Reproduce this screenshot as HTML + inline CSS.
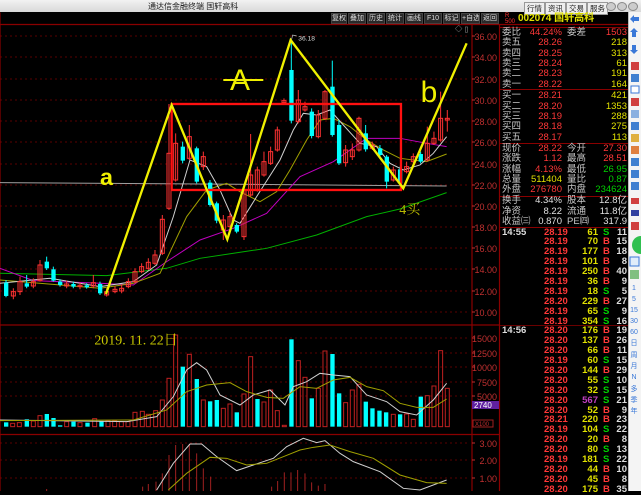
<!DOCTYPE html>
<html><head><meta charset="utf-8"><style>
*{margin:0;padding:0;box-sizing:border-box}
body{width:641px;height:491px;background:#000;overflow:hidden;position:relative;font-family:"Liberation Sans","Noto Sans CJK SC",sans-serif}
.t{position:absolute;white-space:nowrap;font-size:10px;line-height:10px}
.btn{position:absolute;top:13px;height:11px;background:#2a2a2a;border:1px solid #444;color:#ddd;font-size:7px;line-height:9px;text-align:center;white-space:nowrap;overflow:hidden}
.q{position:absolute;left:500px;width:128px;font-size:9.5px;line-height:10px;height:10px}
.q span{position:absolute;white-space:nowrap}
.l{left:2px;color:#c8c8c8}
.v{right:66px;text-align:right}
.l2{left:67px;color:#c8c8c8}
.v2{right:1px;text-align:right}
.r{color:#ff3838}.y{color:#e0e000}.g{color:#00d000}.w{color:#e0e0e0}
</style></head><body>
<div style="position:absolute;left:0;top:0;width:641px;height:12px;background:linear-gradient(#f2f2f2,#d8d8d8)"></div>
<div class="t" style="left:148px;top:2px;font-size:8px;color:#222">通达信金融终端 国轩高科</div>
<div style="position:absolute;left:524px;top:2px;font-size:7.5px;color:#222;white-space:nowrap">
<span style="display:inline-block;border:1px solid #999;padding:0 2px;background:#eee">行情</span><span style="display:inline-block;border:1px solid #999;padding:0 2px;background:#eee">资讯</span><span style="display:inline-block;border:1px solid #999;padding:0 2px;background:#eee">交易</span><span style="display:inline-block;border:1px solid #999;padding:0 2px;background:#eee">服务</span></div>
<div style="position:absolute;left:606px;top:2px;width:10px;height:9px;border-radius:50%;background:#ccc;border:1px solid #888"></div>
<div style="position:absolute;left:617px;top:2px;width:10px;height:9px;border-radius:50%;background:#ccc;border:1px solid #888"></div>
<div style="position:absolute;left:628px;top:2px;width:10px;height:9px;border-radius:50%;background:#ccc;border:1px solid #888"></div>

<div class="btn" style="left:331px;width:16px">复权</div>
<div class="btn" style="left:348px;width:18px">叠加</div>
<div class="btn" style="left:367px;width:18px">历史</div>
<div class="btn" style="left:386px;width:18px">统计</div>
<div class="btn" style="left:405px;width:18px">画线</div>
<div class="btn" style="left:424px;width:18px">F10</div>
<div class="btn" style="left:443px;width:17px">标记</div>
<div class="btn" style="left:461px;width:19px">+自选</div>
<div class="btn" style="left:481px;width:18px">返回</div>

<svg style="position:absolute;left:0;top:0" width="641" height="491">
<g stroke="#5a0000" stroke-dasharray="2,3" stroke-width="1">
<path d="M0 36H470M0 57H470M0 79H470M0 100H470M0 121H470M0 142H470M0 164H470M0 185H470M0 206H470M0 227H470M0 248H470M0 269H470M0 291H470M0 312H470M0 338H470M0 353H470M0 367H470M0 382H470M0 396H470M0 443H470M0 460H470M0 478H470"/>
</g>
<g stroke="#8a0000" stroke-width="1.2" fill="none">
<path d="M0 24.5H641M0 325H500M0 434.5H500M472 24V491M499.5 24V491M0 12.5V491"/>
</g>
<g transform="translate(0,10) scale(0.3333)">
<path d="M0 518 L600 522 L1340 528" stroke="#a0a0a0" stroke-width="3" fill="none"/>
<path d="M0 790 L320 797 L500 775 L600 745 L800 715 L950 675 L1100 620 L1200 597 L1340 548" stroke="#00b000" stroke-width="3" fill="none"/>
<path d="M0 775 L100 812 L300 820 L400 825 L500 755 L600 690 L700 655 L800 610 L900 500 L1000 455 L1100 385 L1200 385 L1280 400 L1340 410" stroke="#c000c0" stroke-width="3" fill="none"/>
<path d="M0 810 L300 835 L400 820 L480 790 L560 620 L620 540 L680 520 L720 545 L780 575 L830 545 L870 480 L920 390 L960 330 L1000 325 L1050 350 L1100 390 L1150 420 L1200 445 L1280 455 L1340 432" stroke="#a0a000" stroke-width="3" fill="none"/>
<path d="M0 820 L150 805 L300 830 L400 815 L470 765 L520 620 L570 450 L620 470 L660 540 L700 630 L720 640 L770 560 L840 450 L880 360 L910 310 L950 315 L990 300 L1030 345 L1080 400 L1130 410 L1170 460 L1210 480 L1260 465 L1300 430 L1340 380" stroke="#d0d0d0" stroke-width="3" fill="none"/>
<path stroke="#ff3232" stroke-width="3" d="M40 835V868M60 800V855M100 805V835M120 750V815M200 812V835M240 818V838M280 795V835M320 835V860M345 828V850M365 825V850M385 805V835M405 775V820M425 760V790M445 745V780M465 720V765M487 615V735M507 282V600M527 370V515M568 345V450M610 425V480M670 615V690M690 605V660M732 530V690M752 372V560M772 470V545M792 425V500M812 410V465M832 350V425M852 265V285M895 240V340M915 275V305M955 300V385M975 240V330M1037 405V470M1057 400V450M1077 320V425M1117 395V420M1180 470V515M1220 455V490M1240 430V460M1282 350V455M1302 365V405M1322 245V395M1342 300V365"/>
<path stroke="#00ffff" stroke-width="3" d="M18 810V862M80 795V835M140 740V780M160 770V815M180 808V830M220 815V835M260 820V836M300 815V855M548 395V460M590 410V520M630 510V590M650 575V640M710 640V670M874 90V340M935 295V385M997 152V380M1017 330V465M1097 345V425M1140 405V440M1160 435V535M1200 470V525M1262 425V460"/>
<g fill="none" stroke="#ff3232" stroke-width="3">
<rect x="34" y="845" width="12" height="13"/><rect x="54" y="815" width="12" height="30"/><rect x="94" y="815" width="12" height="13"/><rect x="114" y="765" width="12" height="47"/><rect x="194" y="822" width="12" height="6"/><rect x="234" y="826" width="12" height="4"/><rect x="274" y="818" width="12" height="10"/><rect x="314" y="845" width="12" height="10"/><rect x="339" y="838" width="12" height="7"/><rect x="359" y="835" width="12" height="8"/><rect x="379" y="815" width="12" height="15"/><rect x="399" y="785" width="12" height="30"/><rect x="419" y="770" width="12" height="15"/><rect x="439" y="757" width="12" height="18"/><rect x="459" y="735" width="12" height="25"/><rect x="481" y="628" width="12" height="102"/><rect x="501" y="430" width="12" height="165"/><rect x="521" y="400" width="12" height="110"/><rect x="562" y="380" width="12" height="65"/><rect x="604" y="440" width="12" height="30"/><rect x="664" y="630" width="12" height="30"/><rect x="684" y="620" width="12" height="30"/><rect x="726" y="540" width="12" height="140"/><rect x="746" y="495" width="12" height="60"/><rect x="766" y="480" width="12" height="60"/><rect x="786" y="455" width="12" height="40"/><rect x="806" y="425" width="12" height="35"/><rect x="826" y="360" width="12" height="60"/><rect x="846" y="272" width="12" height="6"/><rect x="889" y="270" width="12" height="65"/><rect x="909" y="290" width="12" height="10"/><rect x="949" y="315" width="12" height="65"/><rect x="969" y="245" width="12" height="80"/><rect x="1031" y="420" width="12" height="38"/><rect x="1051" y="420" width="12" height="20"/><rect x="1071" y="325" width="12" height="95"/><rect x="1111" y="405" width="12" height="10"/><rect x="1174" y="480" width="12" height="30"/><rect x="1214" y="470" width="12" height="15"/><rect x="1234" y="440" width="12" height="15"/><rect x="1276" y="400" width="12" height="50"/><rect x="1296" y="385" width="12" height="15"/><rect x="1316" y="325" width="12" height="65"/><rect x="1336" y="325" width="12" height="5"/>
</g>
<g fill="#00ffff">
<rect x="12" y="818" width="13" height="40"/><rect x="74" y="820" width="13" height="10"/><rect x="134" y="755" width="13" height="20"/><rect x="154" y="778" width="13" height="34"/><rect x="174" y="815" width="13" height="10"/><rect x="214" y="822" width="13" height="8"/><rect x="254" y="826" width="13" height="6"/><rect x="294" y="822" width="13" height="28"/><rect x="542" y="410" width="13" height="42"/><rect x="584" y="415" width="13" height="100"/><rect x="624" y="518" width="13" height="67"/><rect x="644" y="580" width="13" height="52"/><rect x="704" y="645" width="13" height="20"/><rect x="868" y="180" width="13" height="152"/><rect x="929" y="305" width="13" height="73"/><rect x="991" y="230" width="13" height="145"/><rect x="1011" y="345" width="13" height="115"/><rect x="1091" y="370" width="13" height="48"/><rect x="1134" y="415" width="13" height="20"/><rect x="1154" y="440" width="13" height="75"/><rect x="1194" y="478" width="13" height="42"/><rect x="1256" y="432" width="13" height="23"/>
</g>
<rect x="515" y="282" width="688" height="258" fill="none" stroke="#ff1010" stroke-width="7"/>
<path d="M318 852 L515 285 L682 688 L872 90 L1210 535 L1400 100" fill="none" stroke="#f0f000" stroke-width="7"/>
<path d="M875 88 L878 75 L890 78" fill="none" stroke="#ccc" stroke-width="2"/>
<text x="895" y="92" fill="#ddd" font-size="20">36.18</text>
<text x="300" y="525" fill="#f0f000" font-size="70" font-weight="bold" font-family="Liberation Sans,sans-serif">a</text>
<text x="690" y="240" fill="#f0f000" font-size="90" font-family="Liberation Sans,sans-serif">A</text>
<path d="M670 210H790" stroke="#f0f000" stroke-width="6"/>
<text x="1262" y="276" fill="#f0f000" font-size="90" font-family="Liberation Sans,sans-serif">b</text>
<text x="1198" y="612" fill="#b8b800" font-size="42" font-family="Liberation Serif,Noto Serif CJK SC,serif">4买</text>
<text x="1365" y="64" fill="#aaa" font-size="22">◇ ▯</text>
</g>
<g transform="translate(0,320) scale(0.3333)">
<g fill="none" stroke="#c02020" stroke-width="3">
<rect x="32" y="310" width="12" height="10"/><rect x="52" y="308" width="12" height="12"/><rect x="94" y="303" width="12" height="17"/><rect x="114" y="287" width="12" height="33"/><rect x="194" y="305" width="12" height="15"/><rect x="234" y="308" width="12" height="12"/><rect x="278" y="296" width="12" height="24"/><rect x="318" y="303" width="12" height="17"/><rect x="338" y="303" width="12" height="17"/><rect x="358" y="305" width="12" height="15"/><rect x="378" y="305" width="12" height="15"/><rect x="399" y="277" width="12" height="43"/><rect x="421" y="274" width="12" height="46"/><rect x="439" y="283" width="12" height="37"/><rect x="461" y="272" width="12" height="48"/><rect x="481" y="240" width="12" height="80"/><rect x="501" y="175" width="12" height="145"/><rect x="521" y="45" width="12" height="275"/><rect x="562" y="103" width="12" height="217"/><rect x="604" y="240" width="12" height="80"/><rect x="664" y="265" width="12" height="55"/><rect x="684" y="252" width="12" height="68"/><rect x="726" y="222" width="12" height="98"/><rect x="746" y="110" width="12" height="210"/><rect x="786" y="246" width="12" height="74"/><rect x="806" y="210" width="12" height="110"/><rect x="826" y="272" width="12" height="48"/><rect x="847" y="316" width="12" height="4"/><rect x="889" y="122" width="12" height="198"/><rect x="909" y="172" width="12" height="148"/><rect x="949" y="205" width="12" height="115"/><rect x="969" y="93" width="12" height="227"/><rect x="1031" y="248" width="12" height="72"/><rect x="1051" y="210" width="12" height="110"/><rect x="1071" y="193" width="12" height="127"/><rect x="1174" y="283" width="12" height="37"/><rect x="1214" y="282" width="12" height="38"/><rect x="1234" y="298" width="12" height="22"/><rect x="1276" y="227" width="12" height="93"/><rect x="1296" y="198" width="12" height="122"/><rect x="1316" y="92" width="12" height="228"/><rect x="1336" y="205" width="12" height="115"/>
</g>
<g fill="#00ffff">
<rect x="12" y="307" width="13" height="13"/><rect x="74" y="298" width="13" height="22"/><rect x="134" y="282" width="13" height="38"/><rect x="154" y="294" width="13" height="26"/><rect x="174" y="316" width="13" height="4"/><rect x="214" y="305" width="13" height="15"/><rect x="256" y="308" width="13" height="12"/><rect x="298" y="304" width="13" height="16"/><rect x="542" y="140" width="13" height="180"/><rect x="584" y="177" width="13" height="143"/><rect x="624" y="244" width="13" height="76"/><rect x="644" y="240" width="13" height="80"/><rect x="704" y="277" width="13" height="43"/><rect x="766" y="237" width="13" height="83"/><rect x="868" y="58" width="13" height="262"/><rect x="929" y="235" width="13" height="85"/><rect x="991" y="102" width="13" height="218"/><rect x="1011" y="220" width="13" height="100"/><rect x="1091" y="245" width="13" height="75"/><rect x="1111" y="265" width="13" height="55"/><rect x="1132" y="272" width="13" height="48"/><rect x="1152" y="277" width="13" height="43"/><rect x="1194" y="283" width="13" height="37"/><rect x="1256" y="230" width="13" height="90"/>
</g>
<path d="M0 300 L380 305 L470 290 L520 230 L560 150 L590 128 L620 150 L660 225 L720 255 L760 225 L810 210 L855 255 L880 200 L920 185 L960 160 L1000 165 L1050 170 L1100 225 L1160 245 L1200 275 L1250 285 L1300 240 L1340 190" fill="none" stroke="#d0d0d0" stroke-width="3"/>
<path d="M0 302 L400 300 L500 270 L560 215 L620 195 L690 188 L740 215 L800 232 L850 235 L900 200 L950 205 L1000 180 L1050 172 L1100 200 L1150 212 L1200 250 L1250 262 L1300 262 L1340 237" fill="none" stroke="#a0a000" stroke-width="3"/>
<text x="283" y="74" fill="#c8c800" font-size="42" font-family="Liberation Serif,Noto Serif CJK SC,serif">2019. 11. 22日</text>
<path stroke="#a02020" stroke-width="3" d="M428 513V500M445 513V492M468 513V485M487 513V460M507 513V405M527 513V375M548 513V372M568 513V372M590 513V400M610 513V445M632 513V470M815 513V500M833 513V483M853 513V457M873 513V457M893 513V450M915 513V460M935 513V487M955 513V497M975 513V492M140 513V507"/>
<path d="M470 510 L520 430 L570 372 L605 372 L650 410 L710 452 L760 435 L820 415 L860 380 L910 355 L950 368 L975 362 L1020 400 L1060 425 L1140 455 L1210 505 L1260 510 L1340 480" fill="none" stroke="#d0d0d0" stroke-width="3"/>
<path d="M505 510 L560 460 L630 412 L680 415 L740 435 L800 430 L850 410 L900 390 L940 382 L990 375 L1050 395 L1120 415 L1200 465 L1280 488 L1340 490" fill="none" stroke="#a0a000" stroke-width="3"/>
</g>
<g fill="#c03030" font-size="9" text-anchor="end" font-family="Liberation Sans,sans-serif">
<text x="497" y="40">36.00</text><text x="497" y="61">34.00</text><text x="497" y="83">32.00</text><text x="497" y="104">30.00</text><text x="497" y="125">28.00</text><text x="497" y="146">26.00</text><text x="497" y="168">24.00</text><text x="497" y="189">22.00</text><text x="497" y="210">20.00</text><text x="497" y="231">18.00</text><text x="497" y="252">16.00</text><text x="497" y="273">14.00</text><text x="497" y="295">12.00</text><text x="497" y="316">10.00</text>
<text x="497" y="342">15000</text><text x="497" y="357">12500</text><text x="497" y="371">10000</text><text x="497" y="386">7500</text><text x="497" y="400">5000</text>
<text x="497" y="447">3.00</text><text x="497" y="464">2.00</text><text x="497" y="482">1.00</text>
</g>
<g stroke="#c03030"><path d="M472 36h3M472 57h3M472 79h3M472 100h3M472 121h3M472 142h3M472 164h3M472 185h3M472 206h3M472 227h3M472 248h3M472 269h3M472 291h3M472 312h3M472 338h3M472 353h3M472 367h3M472 382h3M472 396h3M472 443h3M472 460h3M472 478h3"/></g>
<rect x="472" y="401" width="27" height="8" fill="#6020a0"/>
<text x="474" y="408" fill="#fff" font-size="8">2740</text>
<rect x="473" y="420" width="20" height="7" fill="none" stroke="#a02020"/>
<text x="475" y="426" fill="#c03030" font-size="6">X100</text>
<g stroke="#8a0000"><path d="M500 27.5H628M500 89.5H628M500 143.5H628M500 196.5H628M500 227.5H628"/></g>
</svg>

<div class="t" style="left:505px;top:13px;font-size:6px;color:#ff3030;line-height:6px">R<br>500</div>
<div class="t" style="left:518px;top:14px;font-size:10px;color:#e0e000;font-weight:bold">002074 国轩高科</div>

<div class="q" style="top:28px"><span class="l">委比</span><span class="v r">44.24%</span><span class="l2">委差</span><span class="v2 r">1503</span></div>
<div class="q" style="top:38px"><span class="l">卖五</span><span class="v r">28.26</span><span class="v2 y">218</span></div>
<div class="q" style="top:48.5px"><span class="l">卖四</span><span class="v r">28.25</span><span class="v2 y">313</span></div>
<div class="q" style="top:59px"><span class="l">卖三</span><span class="v r">28.24</span><span class="v2 y">61</span></div>
<div class="q" style="top:69px"><span class="l">卖二</span><span class="v r">28.23</span><span class="v2 y">191</span></div>
<div class="q" style="top:79.5px"><span class="l">卖一</span><span class="v r">28.22</span><span class="v2 y">164</span></div>
<div class="q" style="top:91px"><span class="l">买一</span><span class="v r">28.21</span><span class="v2 y">421</span></div>
<div class="q" style="top:101.5px"><span class="l">买二</span><span class="v r">28.20</span><span class="v2 y">1353</span></div>
<div class="q" style="top:112px"><span class="l">买三</span><span class="v r">28.19</span><span class="v2 y">288</span></div>
<div class="q" style="top:122px"><span class="l">买四</span><span class="v r">28.18</span><span class="v2 y">275</span></div>
<div class="q" style="top:132.5px"><span class="l">买五</span><span class="v r">28.17</span><span class="v2 y">113</span></div>
<div class="q" style="top:144px"><span class="l">现价</span><span class="v r">28.22</span><span class="l2">今开</span><span class="v2 r">27.30</span></div>
<div class="q" style="top:154px"><span class="l">涨跌</span><span class="v r">1.12</span><span class="l2">最高</span><span class="v2 r">28.51</span></div>
<div class="q" style="top:164.5px"><span class="l">涨幅</span><span class="v r">4.13%</span><span class="l2">最低</span><span class="v2 g">26.95</span></div>
<div class="q" style="top:175px"><span class="l">总量</span><span class="v y">511404</span><span class="l2">量比</span><span class="v2 g">0.87</span></div>
<div class="q" style="top:185px"><span class="l">外盘</span><span class="v r">276780</span><span class="l2">内盘</span><span class="v2 g">234624</span></div>
<div class="q" style="top:196px"><span class="l">换手</span><span class="v w">4.34%</span><span class="l2">股本</span><span class="v2 w">12.8亿</span></div>
<div class="q" style="top:206.5px"><span class="l">净资</span><span class="v w">8.22</span><span class="l2">流通</span><span class="v2 w">11.8亿</span></div>
<div class="q" style="top:217px"><span class="l">收益㈢</span><span class="v w">0.870</span><span class="l2">PE㈣</span><span class="v2 w">317.9</span></div>

<div style="position:absolute;left:500px;top:227.5px;width:128px;font-size:9.5px;font-weight:bold;line-height:9.9px">
<div style="height:9.9px;position:relative"><span style="position:absolute;left:2px;color:#ddd">14:55</span><span style="position:absolute;left:44px;color:#ff3838">28.19</span><span style="position:absolute;right:30px;color:#e0e000">61</span><span style="position:absolute;left:103px;color:#00d000">S</span><span style="position:absolute;right:1px;color:#ddd">11</span></div>
<div style="height:9.9px;position:relative"><span style="position:absolute;left:44px;color:#ff3838">28.19</span><span style="position:absolute;right:30px;color:#e0e000">70</span><span style="position:absolute;left:103px;color:#ff3838">B</span><span style="position:absolute;right:1px;color:#ddd">15</span></div>
<div style="height:9.9px;position:relative"><span style="position:absolute;left:44px;color:#ff3838">28.19</span><span style="position:absolute;right:30px;color:#e0e000">177</span><span style="position:absolute;left:103px;color:#ff3838">B</span><span style="position:absolute;right:1px;color:#ddd">18</span></div>
<div style="height:9.9px;position:relative"><span style="position:absolute;left:44px;color:#ff3838">28.19</span><span style="position:absolute;right:30px;color:#e0e000">101</span><span style="position:absolute;left:103px;color:#ff3838">B</span><span style="position:absolute;right:1px;color:#ddd">8</span></div>
<div style="height:9.9px;position:relative"><span style="position:absolute;left:44px;color:#ff3838">28.19</span><span style="position:absolute;right:30px;color:#e0e000">250</span><span style="position:absolute;left:103px;color:#ff3838">B</span><span style="position:absolute;right:1px;color:#ddd">40</span></div>
<div style="height:9.9px;position:relative"><span style="position:absolute;left:44px;color:#ff3838">28.19</span><span style="position:absolute;right:30px;color:#e0e000">36</span><span style="position:absolute;left:103px;color:#ff3838">B</span><span style="position:absolute;right:1px;color:#ddd">9</span></div>
<div style="height:9.9px;position:relative"><span style="position:absolute;left:44px;color:#ff3838">28.19</span><span style="position:absolute;right:30px;color:#e0e000">18</span><span style="position:absolute;left:103px;color:#00d000">S</span><span style="position:absolute;right:1px;color:#ddd">5</span></div>
<div style="height:9.9px;position:relative"><span style="position:absolute;left:44px;color:#ff3838">28.20</span><span style="position:absolute;right:30px;color:#e0e000">229</span><span style="position:absolute;left:103px;color:#ff3838">B</span><span style="position:absolute;right:1px;color:#ddd">27</span></div>
<div style="height:9.9px;position:relative"><span style="position:absolute;left:44px;color:#ff3838">28.19</span><span style="position:absolute;right:30px;color:#e0e000">65</span><span style="position:absolute;left:103px;color:#00d000">S</span><span style="position:absolute;right:1px;color:#ddd">9</span></div>
<div style="height:9.9px;position:relative;border-bottom:1px solid #6a0000"><span style="position:absolute;left:44px;color:#ff3838">28.19</span><span style="position:absolute;right:30px;color:#e0e000">354</span><span style="position:absolute;left:103px;color:#00d000">S</span><span style="position:absolute;right:1px;color:#ddd">16</span></div>
<div style="height:9.9px;position:relative"><span style="position:absolute;left:2px;color:#ddd">14:56</span><span style="position:absolute;left:44px;color:#ff3838">28.20</span><span style="position:absolute;right:30px;color:#e0e000">176</span><span style="position:absolute;left:103px;color:#ff3838">B</span><span style="position:absolute;right:1px;color:#ddd">19</span></div>
<div style="height:9.9px;position:relative"><span style="position:absolute;left:44px;color:#ff3838">28.20</span><span style="position:absolute;right:30px;color:#e0e000">137</span><span style="position:absolute;left:103px;color:#ff3838">B</span><span style="position:absolute;right:1px;color:#ddd">26</span></div>
<div style="height:9.9px;position:relative"><span style="position:absolute;left:44px;color:#ff3838">28.20</span><span style="position:absolute;right:30px;color:#e0e000">66</span><span style="position:absolute;left:103px;color:#ff3838">B</span><span style="position:absolute;right:1px;color:#ddd">11</span></div>
<div style="height:9.9px;position:relative"><span style="position:absolute;left:44px;color:#ff3838">28.19</span><span style="position:absolute;right:30px;color:#e0e000">60</span><span style="position:absolute;left:103px;color:#00d000">S</span><span style="position:absolute;right:1px;color:#ddd">15</span></div>
<div style="height:9.9px;position:relative"><span style="position:absolute;left:44px;color:#ff3838">28.20</span><span style="position:absolute;right:30px;color:#e0e000">144</span><span style="position:absolute;left:103px;color:#ff3838">B</span><span style="position:absolute;right:1px;color:#ddd">29</span></div>
<div style="height:9.9px;position:relative"><span style="position:absolute;left:44px;color:#ff3838">28.20</span><span style="position:absolute;right:30px;color:#e0e000">55</span><span style="position:absolute;left:103px;color:#00d000">S</span><span style="position:absolute;right:1px;color:#ddd">10</span></div>
<div style="height:9.9px;position:relative"><span style="position:absolute;left:44px;color:#ff3838">28.20</span><span style="position:absolute;right:30px;color:#e0e000">32</span><span style="position:absolute;left:103px;color:#00d000">S</span><span style="position:absolute;right:1px;color:#ddd">15</span></div>
<div style="height:9.9px;position:relative"><span style="position:absolute;left:44px;color:#ff3838">28.20</span><span style="position:absolute;right:30px;color:#c040c0">567</span><span style="position:absolute;left:103px;color:#00d000">S</span><span style="position:absolute;right:1px;color:#ddd">21</span></div>
<div style="height:9.9px;position:relative"><span style="position:absolute;left:44px;color:#ff3838">28.20</span><span style="position:absolute;right:30px;color:#e0e000">52</span><span style="position:absolute;left:103px;color:#ff3838">B</span><span style="position:absolute;right:1px;color:#ddd">9</span></div>
<div style="height:9.9px;position:relative"><span style="position:absolute;left:44px;color:#ff3838">28.21</span><span style="position:absolute;right:30px;color:#e0e000">220</span><span style="position:absolute;left:103px;color:#ff3838">B</span><span style="position:absolute;right:1px;color:#ddd">23</span></div>
<div style="height:9.9px;position:relative"><span style="position:absolute;left:44px;color:#ff3838">28.19</span><span style="position:absolute;right:30px;color:#e0e000">104</span><span style="position:absolute;left:103px;color:#00d000">S</span><span style="position:absolute;right:1px;color:#ddd">22</span></div>
<div style="height:9.9px;position:relative"><span style="position:absolute;left:44px;color:#ff3838">28.20</span><span style="position:absolute;right:30px;color:#e0e000">20</span><span style="position:absolute;left:103px;color:#ff3838">B</span><span style="position:absolute;right:1px;color:#ddd">8</span></div>
<div style="height:9.9px;position:relative"><span style="position:absolute;left:44px;color:#ff3838">28.20</span><span style="position:absolute;right:30px;color:#e0e000">80</span><span style="position:absolute;left:103px;color:#00d000">S</span><span style="position:absolute;right:1px;color:#ddd">13</span></div>
<div style="height:9.9px;position:relative"><span style="position:absolute;left:44px;color:#ff3838">28.19</span><span style="position:absolute;right:30px;color:#e0e000">181</span><span style="position:absolute;left:103px;color:#00d000">S</span><span style="position:absolute;right:1px;color:#ddd">22</span></div>
<div style="height:9.9px;position:relative"><span style="position:absolute;left:44px;color:#ff3838">28.20</span><span style="position:absolute;right:30px;color:#e0e000">44</span><span style="position:absolute;left:103px;color:#ff3838">B</span><span style="position:absolute;right:1px;color:#ddd">10</span></div>
<div style="height:9.9px;position:relative"><span style="position:absolute;left:44px;color:#ff3838">28.20</span><span style="position:absolute;right:30px;color:#e0e000">45</span><span style="position:absolute;left:103px;color:#ff3838">B</span><span style="position:absolute;right:1px;color:#ddd">8</span></div>
<div style="height:9.9px;position:relative"><span style="position:absolute;left:44px;color:#ff3838">28.20</span><span style="position:absolute;right:30px;color:#e0e000">175</span><span style="position:absolute;left:103px;color:#ff3838">B</span><span style="position:absolute;right:1px;color:#ddd">35</span></div>
</div>

<div style="position:absolute;left:628px;top:12px;width:13px;height:479px;background:#f4f4f4;border-left:1px solid #bbb"></div>
<svg style="position:absolute;left:628px;top:12px" width="13" height="479">
<g fill="#3a78d8">
<path d="M2 7l4-4v2h5v4H6v2z"/><path d="M6 16l4 4H8v5H4v-5H2z"/><path d="M6 42l4-4H8v-5H4v5H2z"/>
<rect x="3" y="50" width="8" height="8" fill="#d04040"/><rect x="3" y="62" width="8" height="8" fill="#4080d0"/>
<rect x="3" y="74" width="8" height="7" fill="#fff" stroke="#3a78d8"/><rect x="3" y="86" width="8" height="8" fill="#d04040"/>
<rect x="3" y="98" width="8" height="8" fill="#8ab0e0"/><rect x="3" y="110" width="8" height="8" fill="#4080d0"/>
<rect x="3" y="122" width="8" height="8" fill="#e0b040"/><rect x="3" y="134" width="8" height="8" fill="#e08040"/>
<rect x="3" y="146" width="8" height="8" fill="#4080d0"/><rect x="3" y="158" width="8" height="8" fill="#4080d0"/>
<rect x="3" y="170" width="8" height="8" fill="#4080d0"/><rect x="3" y="186" width="8" height="6" fill="#d04040"/>
<rect x="3" y="198" width="8" height="6" fill="#3040a0"/><rect x="3" y="210" width="8" height="8" fill="#d04040"/>
<circle cx="13" cy="233" r="9" fill="#30c050"/>
<rect x="2" y="245" width="9" height="9" fill="#e0ecfa" stroke="#3a78d8"/><rect x="2" y="258" width="9" height="9" fill="#80c080"/>
</g>
<g fill="#3a78d8" font-size="7" text-anchor="middle" font-family="Liberation Sans,Noto Sans CJK SC,sans-serif">
<text x="6" y="278">1</text><text x="6" y="289">5</text><text x="6" y="300">15</text><text x="6" y="311">30</text><text x="6" y="322">60</text><text x="6" y="333">日</text><text x="6" y="345">周</text><text x="6" y="356">月</text><text x="6" y="367">N</text><text x="6" y="379">多</text><text x="6" y="390">季</text><text x="6" y="401">年</text>
</g>
</svg>
</body></html>
